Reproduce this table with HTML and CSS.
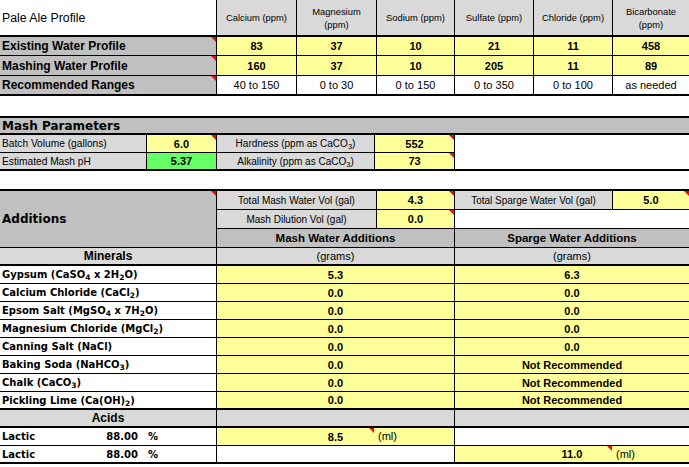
FILE: index.html
```html
<!DOCTYPE html>
<html>
<head>
<meta charset="utf-8">
<title>Pale Ale Profile</title>
<link rel="stylesheet" href="styles.css">
</head>
<body>
<div class="sheet">

  <section class="profile">
    <div class="c title">Pale Ale Profile</div>
    <div class="c hd">Calcium (ppm)</div>
    <div class="c hd">Magnesium<br>(ppm)</div>
    <div class="c hd">Sodium (ppm)</div>
    <div class="c hd">Sulfate (ppm)</div>
    <div class="c hd">Chloride (ppm)</div>
    <div class="c hd end">Bicarbonate<br>(ppm)</div>

    <div class="c lbl flag">Existing Water Profile</div>
    <div class="c val">83</div>
    <div class="c val">37</div>
    <div class="c val">10</div>
    <div class="c val">21</div>
    <div class="c val">11</div>
    <div class="c val end">458</div>

    <div class="c lbl flag">Mashing Water Profile</div>
    <div class="c val">160</div>
    <div class="c val">37</div>
    <div class="c val">10</div>
    <div class="c val">205</div>
    <div class="c val">11</div>
    <div class="c val end">89</div>

    <div class="c lbl flag thick">Recommended Ranges</div>
    <div class="c rng thick">40 to 150</div>
    <div class="c rng thick">0 to 30</div>
    <div class="c rng thick">0 to 150</div>
    <div class="c rng thick">0 to 350</div>
    <div class="c rng thick">0 to 100</div>
    <div class="c rng thick end">as needed</div>
  </section>

  <section class="mash">
    <div class="c mash-title">Mash Parameters</div>
    <div class="c plabel">Batch Volume (gallons)</div>
    <div class="c val flag">6.0</div>
    <div class="c clabel"><span>Hardness (ppm as CaCO<sub>3</sub>)</span></div>
    <div class="c val flag">552</div>
    <div class="c blank"></div>
    <div class="c plabel nb">Estimated Mash pH</div>
    <div class="c val green nb">5.37</div>
    <div class="c clabel nb"><span>Alkalinity (ppm as CaCO<sub>3</sub>)</span></div>
    <div class="c val flag nb">73</div>
  </section>

  <section class="adds">
    <div class="adds-top">
      <div class="c adds-title flag">Additions</div>
      <div class="c clabel">Total Mash Water Vol (gal)</div>
      <div class="c val flag">4.3</div>
      <div class="c clabel">Total Sparge Water Vol (gal)</div>
      <div class="c val flag end">5.0</div>
      <div class="c clabel">Mash Dilution Vol (gal)</div>
      <div class="c val flag">0.0</div>
      <div class="c white end"></div>
      <div class="c colhead span2">Mash Water Additions</div>
      <div class="c colhead span2 end">Sparge Water Additions</div>
    </div>

    <div class="row">
      <div class="c sub-head thick">Minerals</div>
      <div class="c grams thick">(grams)</div>
      <div class="c grams thick end">(grams)</div>
    </div>

    <div class="row">
      <div class="c mineral"><span>Gypsum (CaSO<sub>4</sub> x 2H<sub>2</sub>O)</span></div>
      <div class="c val">5.3</div>
      <div class="c val end">6.3</div>
    </div>
    <div class="row">
      <div class="c mineral"><span>Calcium Chloride (CaCl<sub>2</sub>)</span></div>
      <div class="c val">0.0</div>
      <div class="c val end">0.0</div>
    </div>
    <div class="row">
      <div class="c mineral"><span>Epsom Salt (MgSO<sub>4</sub> x 7H<sub>2</sub>O)</span></div>
      <div class="c val">0.0</div>
      <div class="c val end">0.0</div>
    </div>
    <div class="row">
      <div class="c mineral"><span>Magnesium Chloride (MgCl<sub>2</sub>)</span></div>
      <div class="c val">0.0</div>
      <div class="c val end">0.0</div>
    </div>
    <div class="row">
      <div class="c mineral"><span>Canning Salt (NaCl)</span></div>
      <div class="c val">0.0</div>
      <div class="c val end">0.0</div>
    </div>
    <div class="row">
      <div class="c mineral"><span>Baking Soda (NaHCO<sub>3</sub>)</span></div>
      <div class="c val">0.0</div>
      <div class="c val end">Not Recommended</div>
    </div>
    <div class="row">
      <div class="c mineral"><span>Chalk (CaCO<sub>3</sub>)</span></div>
      <div class="c val">0.0</div>
      <div class="c val end">Not Recommended</div>
    </div>
    <div class="row">
      <div class="c mineral thick"><span>Pickling Lime (Ca(OH)<sub>2</sub>)</span></div>
      <div class="c val thick">0.0</div>
      <div class="c val thick end">Not Recommended</div>
    </div>

    <div class="row">
      <div class="c sub-head thick">Acids</div>
      <div class="c light thick"></div>
      <div class="c light thick end"></div>
    </div>

    <div class="row">
      <div class="c mineral acid"><span class="acid-name">Lactic</span><span class="acid-pct">88.00</span><span class="acid-sign">%</span></div>
      <div class="c val ml"><span>8.5</span><i class="unit">(ml)</i></div>
      <div class="c white end"></div>
    </div>
    <div class="row last">
      <div class="c mineral acid nb"><span class="acid-name">Lactic</span><span class="acid-pct">88.00</span><span class="acid-sign">%</span></div>
      <div class="c white nb"></div>
      <div class="c val ml nb end"><span>11.0</span><i class="unit">(ml)</i></div>
    </div>
  </section>

</div>
</body>
</html>
```
FILE: styles.css
```css
* {
  box-sizing: border-box;
  margin: 0;
  padding: 0;
}

body {
  width: 689px;
  height: 467px;
  overflow: hidden;
  background: #ffffff;
  color: #000000;
  font-family: "Liberation Sans", Arial, sans-serif;
}

.sheet {
  display: flex;
  flex-direction: column;
  width: 689px;
}

/* generic cell */
.c {
  position: relative;
  display: flex;
  align-items: center;
  justify-content: center;
  text-align: center;
  white-space: nowrap;
  overflow: hidden;
  border-right: 1px solid #000;
  border-bottom: 1px solid #000;
}

.c.end { border-right: 0; }
.c.nb { border-bottom: 0; }
.c.thick { border-bottom-width: 2px; }

.flag::after {
  content: "";
  position: absolute;
  top: 0;
  right: 0;
  width: 0;
  height: 0;
  border-top: 5px solid #ff0000;
  border-left: 5px solid transparent;
}

sub {
  font-size: 7.5px;
  vertical-align: -2px;
  line-height: 0;
}

/* ---------- profile ---------- */
.profile {
  display: grid;
  grid-template-columns: 217px 80px 80px 78px 79px 79px 76px;
  grid-template-rows: 37px 19px 20px 20px;
}

.title {
  justify-content: flex-start;
  padding-left: 2px;
  font-size: 12.3px;
  border-bottom-width: 2px;
}

.hd {
  background: #d9d9d9;
  font-size: 9.4px;
  line-height: 13px;
  border-bottom-width: 2px;
}

.lbl {
  background: #c0c0c0;
  justify-content: flex-start;
  padding-left: 2px;
  font-size: 12px;
  font-weight: bold;
}

.val {
  background: #ffff99;
  font-size: 11px;
  font-weight: bold;
}

.rng {
  font-size: 11px;
}

/* ---------- mash parameters ---------- */
.mash {
  margin-top: 20px;
  display: grid;
  grid-template-columns: 147px 70px 158px 80px 234px;
  grid-template-rows: 17px 18px 16px;
  border-top: 2px solid #000;
  border-bottom: 2px solid #000;
}

.mash-title {
  grid-column: 1 / -1;
  background: #c0c0c0;
  justify-content: flex-start;
  padding-left: 2px;
  border-right: 0;
  border-bottom-width: 2px;
  font-family: "DejaVu Sans", Verdana, sans-serif;
  font-size: 12px;
  font-weight: bold;
}

.plabel {
  background: #d9d9d9;
  justify-content: flex-start;
  padding-left: 2px;
  font-size: 10.2px;
}

.clabel {
  background: #d9d9d9;
  font-size: 10px;
}

.green { background: #66ff66; }

.blank {
  grid-column: 5;
  grid-row: 2 / 4;
  border-right: 0;
  border-bottom: 0;
}

/* ---------- additions ---------- */
.adds {
  margin-top: 18px;
  display: flex;
  flex-direction: column;
  border-top: 2px solid #000;
  border-bottom: 2px solid #000;
}

.adds-top {
  display: grid;
  grid-template-columns: 217px 160px 78px 158px 76px;
  grid-template-rows: 19px 19px 19px;
}

.adds-title {
  grid-row: 1 / 4;
  background: #c0c0c0;
  justify-content: flex-start;
  padding-left: 2px;
  font-family: "DejaVu Sans", Verdana, sans-serif;
  font-size: 12px;
  font-weight: bold;
}

.white { background: #ffffff; }
.adds-top .white { grid-column: span 2; }

.colhead {
  background: #c0c0c0;
  font-size: 11.5px;
  font-weight: bold;
}

.span2 { grid-column: span 2; }

.row {
  display: grid;
  grid-template-columns: 217px 238px 234px;
  height: 18px;
}

.row.last { height: 16px; }

.sub-head {
  background: #d9d9d9;
  font-size: 12px;
  font-weight: bold;
}

.grams {
  background: #d9d9d9;
  font-size: 11px;
}

.light { background: #d9d9d9; }

.mineral {
  justify-content: flex-start;
  text-align: left;
  padding-left: 2px;
  font-family: "DejaVu Sans", Verdana, sans-serif;
  font-size: 10px;
  font-weight: bold;
}

.acid-name { width: 96px; text-align: left; }
.acid-pct { width: 40px; text-align: right; }
.acid-sign { margin-left: 10px; }

.ml .unit {
  position: absolute;
  left: 161px;
  top: 2px;
  font-style: normal;
  font-weight: normal;
  font-size: 11px;
}

.ml::after {
  content: "";
  position: absolute;
  top: 0;
  left: 152px;
  width: 0;
  height: 0;
  border-top: 5px solid #ff0000;
  border-left: 5px solid transparent;
}
```
